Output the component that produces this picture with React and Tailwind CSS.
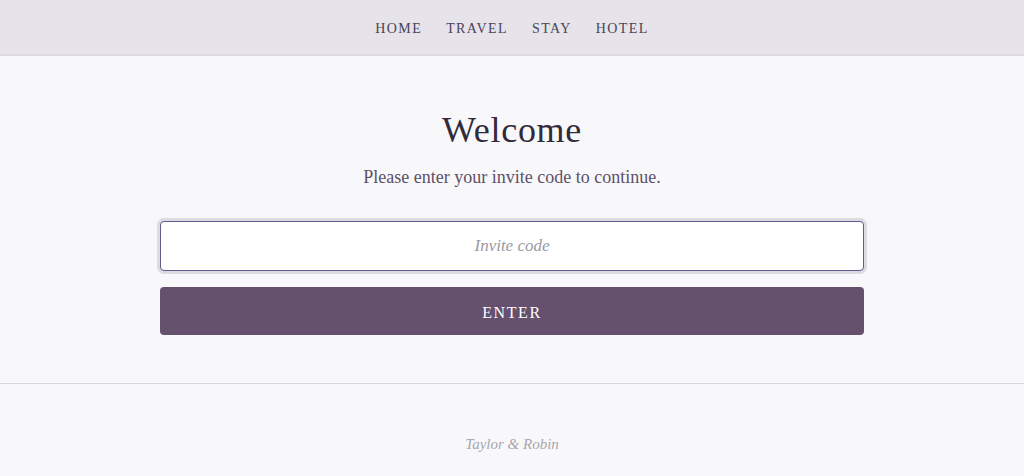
export default function App() {
  const serif = { fontFamily: '"Liberation Serif", "DejaVu Serif", serif' };
  const links = ["HOME", "TRAVEL", "STAY", "HOTEL"];

  return (
    <div className="min-h-screen bg-[#f8f8fa]" style={serif}>
      {/* Top nav */}
      <nav className="h-[56px] bg-[#e6e3ea] border-b-2 border-[#dcd9e2] flex items-center justify-center gap-6 pt-[2px]">
        {links.map((l) => (
          <a key={l} href="#" className="text-[14px] tracking-[0.1em] text-[#4a4256]">
            {l}
          </a>
        ))}
      </nav>

      {/* Invite form */}
      <main className="pt-[54px] pb-[48px] border-b border-[#d9d8dd]">
        <div className="w-[704px] mx-auto flex flex-col items-center">
          <h1 className="text-[36px] leading-[40px] tracking-[0.02em] text-[#322b3b]">Welcome</h1>
          <p className="mt-[14px] text-[18px] leading-[26px] text-[#5e5068]">
            Please enter your invite code to continue.
          </p>
          <input
            type="text"
            placeholder="Invite code"
            className="mt-[31px] w-full h-[50px] bg-white rounded border border-[#5f5a8f] ring-[3px] ring-[#dddbe2] outline-none text-center italic text-[17px] text-[#322b3b] placeholder:text-[#9a98a4]"
            style={serif}
          />
          <button
            className="mt-[16px] w-full h-[48px] pt-[3px] rounded bg-[#65506d] text-white text-[16px] tracking-[0.1em]"
            style={serif}
          >
            ENTER
          </button>
        </div>
      </main>

      {/* Footer */}
      <footer className="pt-[50px] pb-[24px] text-center">
        <p className="italic text-[15px] leading-[20px] text-[#a7a5ae]">Taylor &amp; Robin</p>
      </footer>
    </div>
  );
}
